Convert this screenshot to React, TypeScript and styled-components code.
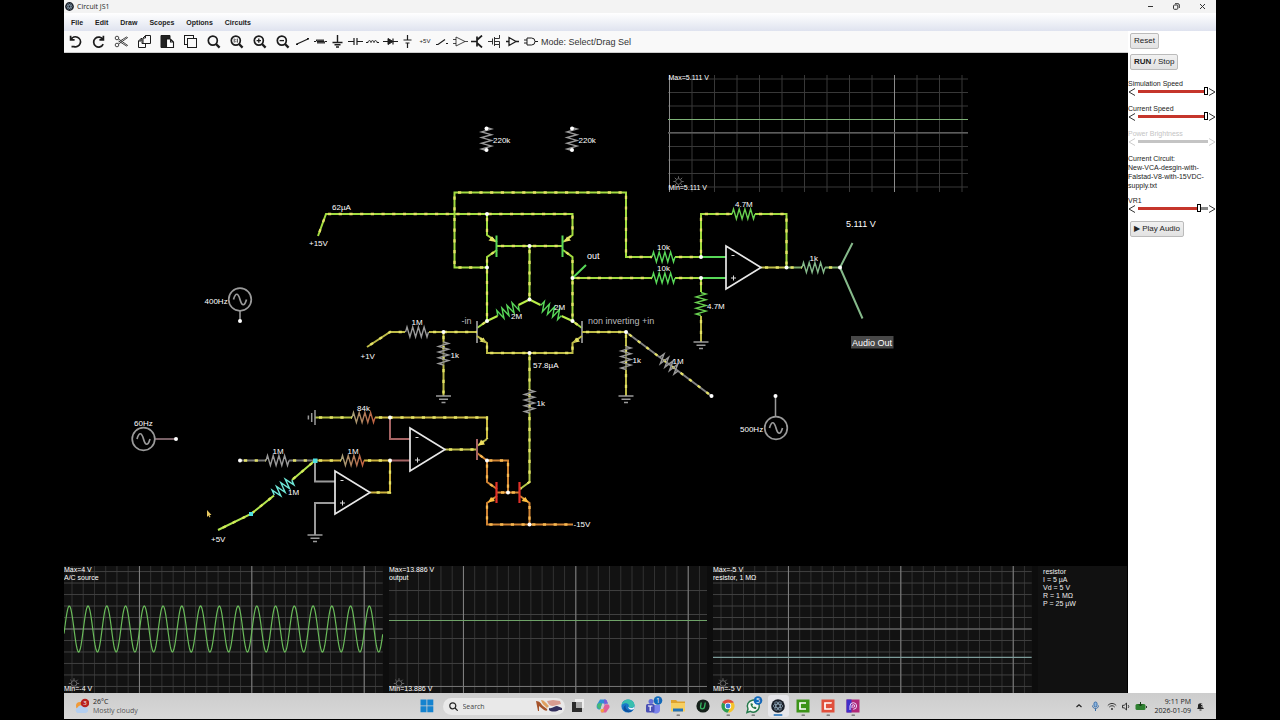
import React from "react";
import styled, { createGlobalStyle } from "styled-components";

const sans = `"Liberation Sans", Arial, sans-serif`;
const ui = `"Open Sans", "Noto Sans", sans-serif`;

const Global = createGlobalStyle`
  * { box-sizing: border-box; }
  body { margin: 0; background: #000; font-family: ${sans}; }
  button { font: inherit; color: inherit; cursor: pointer; }
`;

const Page = styled.div`
  display: flex;
  flex-direction: column;
  height: 100vh;
  padding: 0 5% 1px;
  background: #000;
`;

const TitleBar = styled.header`
  display: flex;
  align-items: center;
  justify-content: space-between;
  height: 13px;
  background: #f3f3f3;
  font-family: ${ui};
  font-size: 7px;
  line-height: 12px;
  color: #222;
`;

const TitleName = styled.div`
  display: flex;
  align-items: center;
  gap: 3px;
  padding-left: 1px;
`;

const WindowButtons = styled.div`
  display: flex;
  gap: 2px;
  padding-right: 2px;
`;

const WindowButton = styled.button`
  display: grid;
  place-items: center;
  width: 24px;
  height: 12px;
  padding: 0;
  border: 0;
  background: none;
`;

const MenuBar = styled.nav`
  display: flex;
  align-items: center;
  gap: 12px;
  height: 18px;
  padding: 0 7px;
  background: linear-gradient(#ffffff, #dfe3ef);
  font-size: 7px;
  font-weight: bold;
  color: #222;
`;

const MenuItem = styled.button`
  padding: 0;
  border: 0;
  background: none;
`;

const Body = styled.div`
  display: flex;
  flex: 1;
  min-height: 0;
`;

const Main = styled.main`
  display: flex;
  flex-direction: column;
  flex: 1;
  min-width: 0;
`;

const Toolbar = styled.div`
  display: flex;
  align-items: center;
  height: 22px;
  background: #f9f9f9;
  border-bottom: 1px solid #ccc;
`;

const ToolButton = styled.button`
  display: grid;
  place-items: center;
  width: 23px;
  height: 20px;
  padding: 0;
  border: 0;
  background: none;
`;

const PartGroup = styled.div`
  display: flex;
  width: 245px;
`;

const PartButton = styled(ToolButton)`
  flex: 1;
  width: auto;
`;

const Mode = styled.span`
  margin-left: 2px;
  font-size: 9px;
  color: #333;
`;

const Canvas = styled.svg`
  display: block;
  flex: 1;
  width: 100%;
  min-height: 0;
  background: #000;
  font-family: ${sans};
`;

const ScopeStrip = styled.section`
  display: grid;
  grid-template-columns: 319fr 319fr 319fr 89fr;
  gap: 6px;
  height: 127px;
  background: #0d0d0d;
  margin-right: 1px;
`;

const ScopeSvg = styled.svg`
  display: block;
  width: 100%;
  height: 127px;
  background: #121212;
  font-family: ${sans};
`;

const Readout = styled.div`
  padding: 2px 5px;
  background: #111;
  color: #eee;
  font-size: 7px;
  line-height: 8px;
`;

const Sidebar = styled.aside`
  display: flex;
  flex-direction: column;
  align-items: flex-start;
  width: 88px;
  padding-top: 2px;
  background: #fff;
  font-size: 7px;
  line-height: 9px;
  color: #222;
`;

const SideButton = styled.button`
  height: 16px;
  margin: 0 0 5px 2px;
  padding: 0 3px;
  border: 1px solid #bbb;
  border-radius: 2px;
  background: linear-gradient(#f1f1f1, #e2e2e2);
  font-size: 8px;
  line-height: 14px;
  white-space: nowrap;
`;

const SliderBlock = styled.div<{ $off?: boolean }>`
  width: 100%;
  height: 25px;
  color: ${(p) => (p.$off ? "#c4c4c4" : "#222")};
`;

const Sliders = styled.div`
  width: 100%;
  padding-top: 4px;
`;

const SliderLabel = styled.label`
  display: block;
  height: 8px;
`;

const SliderRow = styled.div`
  display: flex;
  align-items: center;
  height: 9px;
`;

const Step = styled.button`
  display: grid;
  place-items: center;
  width: 8px;
  height: 9px;
  padding: 0;
  border: 0;
  background: none;
`;

const Range = styled.input<{ $fill: number; $off?: boolean }>`
  appearance: none;
  flex: 1;
  min-width: 0;
  height: 9px;
  margin: 0 0 0 2px;
  background: none;
  &::-webkit-slider-runnable-track {
    height: 3px;
    background: ${(p) =>
      p.$off ? "#c4c4c4" : `linear-gradient(to right, #c5352b ${p.$fill}%, #888 ${p.$fill}%)`};
  }
  &::-webkit-slider-thumb {
    appearance: none;
    width: 4px;
    height: 8px;
    margin-top: -3px;
    border: 1px solid #000;
    background: #fff;
    visibility: ${(p) => (p.$off ? "hidden" : "visible")};
  }
`;

const CircuitName = styled.p`
  margin: 0 0 6px;
  overflow-wrap: anywhere;
`;

const Taskbar = styled.footer`
  display: grid;
  grid-template-columns: 1fr auto 1fr;
  align-items: center;
  height: 26px;
  background: linear-gradient(#cdcdcd, #d8d8d8);
  font-family: ${ui};
  font-size: 7px;
  line-height: 9px;
  color: #222;
`;

const Weather = styled.button`
  display: flex;
  align-items: center;
  justify-self: start;
  gap: 4px;
  padding: 0 0 0 10px;
  border: 0;
  background: none;
  text-align: left;
`;

const Muted = styled.span`
  display: block;
  color: #555;
`;

const Apps = styled.div`
  display: flex;
  align-items: center;
`;

const AppButton = styled.button<{ $active?: boolean }>`
  display: grid;
  place-items: center;
  width: ${(p) => (p.$active ? "21px" : "25px")};
  height: 22px;
  margin: 0 ${(p) => (p.$active ? "2px" : "0")};
  padding: 0;
  border: 0;
  border-radius: 3px;
  background: ${(p) => (p.$active ? "#e6e6ea" : "none")};
`;

const SearchBox = styled.label`
  display: flex;
  align-items: center;
  gap: 5px;
  width: 122px;
  height: 17px;
  margin: 0 1px 0 3px;
  padding: 0 2px 0 6px;
  border-radius: 9px;
  background: #e9e9e9;
`;

const SearchInput = styled.input`
  flex: 1;
  min-width: 0;
  padding: 0;
  border: 0;
  background: none;
  font-family: ${ui};
  font-size: 7px;
  &::placeholder { color: #444; opacity: 1; }
`;

const Tray = styled.div`
  display: flex;
  align-items: center;
  justify-self: end;
  gap: 5px;
  padding-right: 11px;
`;

const Clock = styled.time`
  margin-left: 2px;
  text-align: right;
`;

/* ---------- toolbar icons ---------- */

const Tool = ({ label, children }: { label: string; children: React.ReactNode }) => (
  <ToolButton aria-label={label}>
    <svg width="15" height="15" viewBox="0 0 15 15" fill="none" stroke="#1c1c1c" strokeWidth="1.7">
      {children}
    </svg>
  </ToolButton>
);

const Part = ({ label, children }: { label: string; children: React.ReactNode }) => (
  <PartButton aria-label={label}>
    <svg width="15" height="13" viewBox="0 0 15 13" fill="none" stroke="#1c1c1c" strokeWidth="1">
      {children}
    </svg>
  </PartButton>
);

const Lens = () => (
  <>
    <circle cx="6.8" cy="6.6" r="4.5" />
    <path d="M10 10l3.6 3.6" strokeWidth="2.3" />
  </>
);

const ToolIcons = () => (
  <>
    <Tool label="Undo">
      <path d="M2.600 1.800v4h4M3 5.600A5 5 0 1 1 6 12.600H3.500" strokeWidth="1.700" />
    </Tool>
    <Tool label="Redo">
      <path d="M12.400 1.800v4h-4M12 5.600A5 5 0 1 0 12.200 10.200" strokeWidth="1.700" />
    </Tool>
    <Tool label="Cut">
      <g strokeWidth="0.900" stroke="#333">
        <circle cx="3" cy="4" r="1.800" />
        <circle cx="3" cy="11" r="1.800" />
        <path d="M4.600 5L13.600 11.400 12.500 12 4.600 7M4.600 10L13.600 3.600 12.500 3 4.600 8" />
      </g>
    </Tool>
    <Tool label="Copy">
      <path d="M5 4.500V9.500H13.500V1.500H8.500L6 4V9.500M8.500 1.500V4H6M5 4.500H4L1.500 7V13.500H8.500V9.500M4 4.500V7H1.500" strokeWidth="1" />
    </Tool>
    <Tool label="Paste">
      <path d="M1 1.500h9v3H6v9H1z" fill="#222" strokeWidth="1" />
      <path d="M6.500 5h4l3 3v5.500h-7zM10.500 5v3h3" strokeWidth="1.100" fill="#fff" />
    </Tool>
    <Tool label="Duplicate">
      <rect x="1.500" y="1.500" width="9" height="9" strokeWidth="1" />
      <rect x="4.500" y="4.500" width="9" height="9" strokeWidth="1" fill="#f9f9f9" />
    </Tool>
    <Tool label="Find"><Lens /></Tool>
    <Tool label="Zoom 100%">
      <Lens />
      <path d="M5.200 4.600v4M8.400 4.600v4M6.800 5.200v1M6.800 7.200v1" strokeWidth="0.800" />
    </Tool>
    <Tool label="Zoom in">
      <Lens />
      <path d="M4.600 6.600h4.400M6.800 4.400v4.400" strokeWidth="1.300" />
    </Tool>
    <Tool label="Zoom out">
      <Lens />
      <path d="M4.600 6.600h4.400" strokeWidth="1.300" />
    </Tool>
    <PartGroup>
      <Part label="Wire">
        <path d="M2 9L13 4" strokeWidth="1.300" />
        <path d="M1 8.500h2v1.500H1zM12 3h2v1.500h-2z" fill="#1c1c1c" stroke="none" />
      </Part>
      <Part label="Resistor"><path d="M1 6.500h2l1-2 1 4 1-4 1 4 1-4 1 4 1-4 1 4 .700-2H14" /></Part>
      <Part label="Ground"><path d="M7.500 0v7.500M2.500 7.500h10M4.500 9.800h6M6 12h3" strokeWidth="1.400" /></Part>
      <Part label="Capacitor"><path d="M0 6.500h6M9 6.500h6M6 3v7M9 3v7" strokeWidth="1.200" /></Part>
      <Part label="Inductor"><path d="M1 7.500h2c0-2.500 3-2.500 3 0 0-2.500 3-2.500 3 0 0-2.500 3-2.500 3 0h2" /></Part>
      <Part label="Diode">
        <path d="M0 6.500h15M10 3.500v6" strokeWidth="1.200" />
        <path d="M5 3.500v6l5-3z" fill="#1c1c1c" />
      </Part>
      <Part label="Voltage source"><path d="M7.500 0v5M7.500 8v5M3.500 5h8M5.500 8h4" strokeWidth="1.200" /></Part>
      <PartButton aria-label="Rail">
        <svg width="15" height="13" viewBox="0 0 15 13">
          <text x="7" y="8" textAnchor="middle" fontSize="6" fontFamily="Liberation Sans" fill="#222">+5V</text>
        </svg>
      </PartButton>
      <Part label="Switch"><path d="M1 9.500h2l7-5M11 8.500h2" strokeWidth="1.200" /></Part>
      <Part label="Op-amp"><path d="M3 2l9 4.500L3 11zM0 4.500h3M0 8.500h3M12 6.500h3" strokeWidth="0.800" /></Part>
      <Part label="NPN transistor"><path d="M1 6.500h6M7 1.500v10M7 5l5-4.500M7 8l5 4.500" strokeWidth="1.700" /></Part>
      <Part label="MOSFET"><path d="M0 6.500h4.500M4.500 3.500v6M6.500 2v9M6.500 3.500h5V0M6.500 9.500h5V13M6.500 6.500h5v3" strokeWidth="0.900" /></Part>
      <Part label="Inverter"><path d="M4 2.500l7 4-7 4zM1 6.500h3M11 6.500h3" strokeWidth="1.300" /></Part>
      <Part label="AND gate"><path d="M4 3h4.500a3.500 3.500 0 0 1 0 7H4zM1 5h3M1 8h3M12 6.500h3" /></Part>
    </PartGroup>
  </>
);

/* ---------- circuit drawing ---------- */

const LIME = "#a2dc40";
const GREEN = "#58d858";
const OLIVE = "#bdbb48";
const GRAY = "#9a9a9a";
const PALE = "#85b98a";
const ROSE = "#a56464";
const ORANGE = "#d08434";

const Wire = ({ d, c = LIME, dots = true, dot = "#e4e266" }: { d: string; c?: string; dots?: boolean; dot?: string }) => (
  <g fill="none">
    <path d={d} stroke={c} strokeWidth="2" />
    {dots && <path d={d} stroke={dot} strokeWidth="2.300" strokeDasharray="3.200 7.500" strokeDashoffset="-4" />}
  </g>
);

const Resistor = ({ x, y, a = 0, c = GRAY }: { x: number; y: number; a?: number; c?: string }) => (
  <path
    transform={`translate(${x} ${y}) rotate(${a})`}
    d="M-11.500 0.100L-10-5L-7.100 5L-4.300-5L-1.400 5L1.400-5L4.300 5L7.100-5L10 5L11.500 0"
    fill="none"
    stroke={c}
    strokeWidth="1.400"
  />
);

const Ground = ({ x, y, a = 0 }: { x: number; y: number; a?: number }) => (
  <path
    transform={`translate(${x} ${y}) rotate(${a})`}
    d="M-7.500 0h15M-4.500 3.300h9M-2 6.600h4"
    stroke={GRAY}
    strokeWidth="1.500"
  />
);

const OpAmp = ({ x, y }: { x: number; y: number }) => (
  <g transform={`translate(${x} ${y})`}>
    <path d="M0-21.500V21.500L35 0z" fill="none" stroke="#e8e8e8" strokeWidth="1.700" />
    <path d="M5.500-12h3M5 10.500h5M7.500 8v5" stroke="#ddd" strokeWidth="1" />
  </g>
);

const Source = ({ x, y }: { x: number; y: number }) => (
  <g transform={`translate(${x} ${y})`} fill="none" stroke={GRAY} strokeWidth="1.700">
    <circle r="11.300" />
    <path d="M-6.500 0C-4.500-7-2-7 0 0S4.500 7 6.500 0" />
  </g>
);

const Label = ({ x, y, s = 8, children, fill = "#fff" }: { x: number; y: number; s?: number; children: string; fill?: string }) => (
  <text x={x} y={y} fontSize={s} fill={fill}>{children}</text>
);

const Gear = ({ x, y }: { x: number; y: number }) => (
  <g transform={`translate(${x} ${y})`} fill="none" stroke="#666" strokeWidth="1">
    <circle r="2.800" />
    <path d="M0-5.200V-3M0 3V5.200M-5.200 0H-3M3 0H5.200M-3.700-3.700l1.500 1.500M2.200 2.200l1.500 1.500M-3.700 3.700l1.500-1.500M2.200-2.200l1.500-1.500" />
  </g>
);

const nodes: [number, number][] = [
  [487, 214], [529.5, 246], [487, 267.5], [529.5, 299.5], [487, 321], [572.5, 321], [572.5, 278],
  [443.5, 332], [529.5, 353], [626, 332], [711.5, 396], [775.5, 396], [701, 257], [701, 278],
  [786.5, 267.5], [840, 267.5], [240, 321], [176, 439], [240, 460.5], [390, 417.5], [390, 460.5],
  [487, 460.5], [508, 492.5], [529.5, 524.5],
  [486.5, 128.5], [486.5, 150], [572, 128.5], [572, 150],
];

const steps = (from: number, to: number, by: number) => {
  const out: number[] = [];
  for (let v = from; v <= to; v += by) out.push(v);
  return out;
};

const Circuit = () => (
  <Canvas viewBox="64 53 1064 513" role="img" aria-label="Circuit schematic">
    <defs>
      <linearGradient id="warm">
        <stop offset="0" stopColor="#a5a078" />
        <stop offset="1" stopColor="#c06040" />
      </linearGradient>
    </defs>

    {/* floating scope */}
    <g stroke="#383838">
      {steps(692, 968, 22.5).map((x) => <path key={x} d={`M${x} 75V192`} />)}
      {steps(79, 190, 13.5).map((y) => <path key={y} d={`M668 ${y}H968`} />)}
    </g>
    <path d="M669.500 75V192M894.500 75V192" stroke="#8a8a8a" />
    <path d="M668 132.800H968" stroke="#5c5c5c" strokeWidth="1.500" />
    <path d="M668 119.500H968" stroke="#7fb478" />
    <Gear x={678.5} y={181.5} />
    <Label x={668.5} y={80} s={7}>Max=5.111 V</Label>
    <Label x={668.5} y={189.5} s={7}>Min=5.111 V</Label>

    {/* differential stage */}
    <Wire d="M318 236L326 214H572.5V235L563 242" />
    <Wire d="M487 267.5H454.5V192.5H626V257H652" />
    <Wire d="M487 214V235L497 242M497 250L487 257V321L477 328" />
    <Wire d="M497 246H562.5M529.5 246V299.5" />
    <Wire d="M563 250L572.5 257V321L582 328" />
    <Wire d="M529.5 299.5L518.500 305M497.500 316L487 321M529.500 299.500L540.500 305M561.500 316L572.500 321" c="#b9ee48" dots={false} />
    <Wire d="M572.5 278H652M675 278H701" />
    <Wire d="M675 257H701" />
    <Wire d="M572.5 278L586 265M701 257H726M701 278H726" c={GREEN} dots={false} />
    <path d="M496.500 235.500V257M562.500 235.500V257" stroke={GREEN} strokeWidth="2" />
    <path d="M477 321V343M582 321V343" stroke={GRAY} strokeWidth="1.700" />
    <path d="M495.500 242l-7-1.500 4-4zM564 242l7-1.500-4-4z" fill="#e8e468" />
    <path d="M486.500 343l-7-1.500 4-4zM573 343l7-1.500-4-4z" fill="#e8e468" />
    <Resistor x={508} y={310.5} a={-27} c={GREEN} />
    <Resistor x={551} y={310.5} a={27} c={GREEN} />
    <Wire d="M477 336L487 343V353H572.5V343L582 336" c={OLIVE} />
    <Wire d="M367 347L390 332H405M429 332H477M443.5 332V342M443.5 365V396" c={OLIVE} />
    <Wire d="M582 332H626V346M626 370V396" c={OLIVE} />
    <Wire d="M529.5 353V390M529.5 413V482L520 489" c="#b4c848" />
    <Wire d="M443.5 342V365M626 346V370M529.500 390V413" c="#6f6f40" />
    <Wire d="M626 332L711.5 396" c="#828282" />
    <Resistor x={417} y={332} />
    <Resistor x={443.5} y={353.5} a={90} />
    <Resistor x={626} y={358} a={90} />
    <Resistor x={529.5} y={401.5} a={90} />
    <Resistor x={669} y={364} a={37} />
    <Ground x={443.5} y={396} />
    <Ground x={626} y={396} />

    {/* output amplifier */}
    <Wire d="M701 257V214H732M755 214H786.5V267.5" />
    <Wire d="M761 267.5H786.5" c={OLIVE} />
    <Wire d="M786.5 267.5H802M825 267.5H840" c="#7aa868" />
    <Wire d="M701 278V292" />
    <Wire d="M701 316V342" c={OLIVE} />
    <Wire d="M852.5 243L840 267.5L862.5 318.500" c={PALE} dots={false} />
    <Resistor x={663.5} y={257} c={GREEN} />
    <Resistor x={663.5} y={278} c={GREEN} />
    <Resistor x={743.5} y={214} c="#68d050" />
    <Resistor x={701} y={304} a={90} c="#68d050" />
    <Resistor x={813.5} y={267.5} c={PALE} />
    <Ground x={701} y={342} />
    <OpAmp x={726} y={267.5} />

    {/* control section */}
    <Wire d="M315 417.5H352" c="#b4c040" />
    <Wire d="M375 417.5H487V439" c="#c9b840" />
    <Wire d="M487 439L477 446" c={OLIVE} />
    <Wire d="M390 417.5V439H410M390 460.5H410" c={ROSE} dots={false} />
    <Wire d="M445 449.5H477" c={OLIVE} />
    <Wire d="M477 453L487 460.5H508V492.5M487 460.5V482L497 489M497 492.5H519M497 496L487 503V524.5H573M520 496L529.5 503V524.5" c={ORANGE} dot="#f8b850" />
    <path d="M477 439V460" stroke={ROSE} strokeWidth="2" />
    <path d="M496.500 482V503M519.500 482V503" stroke="#e03028" strokeWidth="2.200" />
    <path d="M478.500 445.500l6.500-1-4-5z" fill="#f0e060" />
    <path d="M488 502.500l7-1.500-4-4zM528.500 502.500l-7-1.500 4-4z" fill="#ffc040" />
    <Wire d="M240 460.5H266M289 460.5H315" c="#777" />
    <Wire d="M315 460.5H341M364 460.500H390V492.500H370" c="#cdb23c" />
    <Wire d="M315 460.500V481.500H335M335 503H315V535" c={GRAY} dots={false} />
    <Wire d="M315 460.5L292 480M274 495.500L251 514L218 530" c="#b4e850" dot="#d6ea58" />
    <Resistor x={277.5} y={460.5} />
    <Resistor x={352.5} y={460.5} c="url(#warm)" />
    <Resistor x={363.5} y={417.5} c="url(#warm)" />
    <Resistor x={283} y={487.5} a={-40} c="#6fe8d8" />
    <Ground x={315} y={417.5} a={90} />
    <Ground x={315} y={535} />
    <OpAmp x={410} y={449.5} />
    <OpAmp x={335} y={492.5} />

    {/* signal sources and loose resistors */}
    <path d="M240 311V321M775.500 396V417" stroke={GRAY} strokeWidth="1.500" />
    <path d="M155 439H176" stroke="#a08088" strokeWidth="1.500" />
    <Source x={240} y={299.5} />
    <Source x={143.5} y={439} />
    <Source x={776} y={428} />
    <Resistor x={486.5} y={139} a={90} />
    <Resistor x={572} y={139} a={90} />

    {nodes.map(([x, y]) => <circle key={`${x}-${y}`} cx={x} cy={y} r="2" fill="#fff" />)}
    <path d="M313 458.500h4.500v4.500H313zM249 512h4v4h-4z" fill="#4fe0e0" />

    <Label x={493} y={143}>220k</Label>
    <Label x={578.5} y={143}>220k</Label>
    <Label x={332} y={210}>62µA</Label>
    <Label x={309} y={245.5}>+15V</Label>
    <Label x={204.5} y={303.5}>400Hz</Label>
    <Label x={411.5} y={325}>1M</Label>
    <Label x={360.5} y={358.5}>+1V</Label>
    <Label x={450.5} y={357.5}>1k</Label>
    <Label x={461.5} y={323.5} s={9} fill="#bbb">-in</Label>
    <Label x={588} y={323.5} s={9} fill="#bbb">non inverting +in</Label>
    <Label x={587} y={259} s={9}>out</Label>
    <Label x={511} y={319}>2M</Label>
    <Label x={554} y={309.5}>2M</Label>
    <Label x={533} y={367.5}>57.8µA</Label>
    <Label x={536.5} y={405.5}>1k</Label>
    <Label x={632.5} y={362.5}>1k</Label>
    <Label x={672.5} y={363.5}>1M</Label>
    <Label x={657} y={250}>10k</Label>
    <Label x={657} y={271}>10k</Label>
    <Label x={735} y={207}>4.7M</Label>
    <Label x={707} y={309}>4.7M</Label>
    <Label x={809.5} y={260.5}>1k</Label>
    <Label x={846} y={227} s={9}>5.111 V</Label>
    <rect x="851" y="336" width="42.500" height="12.500" fill="#484848" />
    <Label x={852} y={345.5} s={9}>Audio Out</Label>
    <Label x={740} y={431.5}>500Hz</Label>
    <Label x={134} y={426}>60Hz</Label>
    <Label x={357} y={411}>84k</Label>
    <Label x={272.5} y={453.5}>1M</Label>
    <Label x={347.5} y={453.5}>1M</Label>
    <Label x={288} y={495}>1M</Label>
    <Label x={211} y={541.5}>+5V</Label>
    <Label x={573.5} y={527}>-15V</Label>
    <path d="M207 510v7l1.500-1.500 1 2 1-.5-1-2h2z" fill="#e8c860" />
  </Canvas>
);

/* ---------- scopes ---------- */

type ScopeProps = {
  max: string; min: string; name: string;
  rows: number[]; strongRow: number; major: number; children: React.ReactNode;
};

const Scope = ({ max, min, name, rows, strongRow, major, children }: ScopeProps) => (
  <ScopeSvg viewBox="0 0 319 127" role="img" aria-label={name}>
    <g stroke="#323232">
      {steps(major - 67.5, 319, 11.25).map((x) => <path key={x} d={`M${x} 0V127`} />)}
    </g>
    <g stroke="#404040">
      {rows.map((y) => <path key={y} d={`M0 ${y}H319`} />)}
    </g>
    <g stroke="#858585">
      {[0, 1, 2].map((i) => <path key={i} d={`M${major + i * 112.5} 0V127`} />)}
    </g>
    <path d={`M0 ${strongRow}H319`} stroke="#777" />
    <Gear x={10} y={117.5} />
    {children}
    <Label x={0} y={5.5} s={7}>{max}</Label>
    <Label x={0} y={13.5} s={7}>{name}</Label>
    <Label x={0} y={125.5} s={7}>{min}</Label>
  </ScopeSvg>
);

const sine = Array.from({ length: 639 }, (_, i) => {
  const x = i / 2;
  const y = 63 - 23 * Math.cos(((x - 5.3) / 18.77) * Math.PI * 2);
  return `${i ? "L" : "M"}${x} ${y.toFixed(1)}`;
}).join("");

const fineRows = steps(5.5, 126, 11.5);
const coarseRows = [24.5, 48.5, 72.5, 97.5];

/* ---------- sidebar ---------- */

const Slider = ({ id, label, value, off }: { id: string; label: string; value: number; off?: boolean }) => (
  <SliderBlock $off={off}>
    <SliderLabel htmlFor={id}>{label}</SliderLabel>
    <SliderRow>
      <Step aria-label={`Decrease ${label}`} disabled={off}>
        <svg width="8" height="8" viewBox="0 0 8 8" fill="none" stroke={off ? "#ccc" : "#333"}><path d="M7 .500L1 4l6 3.500" /></svg>
      </Step>
      <Range id={id} type="range" min={0} max={100} defaultValue={value} disabled={off} $fill={value} $off={off} />
      <Step aria-label={`Increase ${label}`} disabled={off}>
        <svg width="8" height="8" viewBox="0 0 8 8" fill="none" stroke={off ? "#ccc" : "#333"}><path d="M1 .500L7 4l-6 3.500" /></svg>
      </Step>
    </SliderRow>
  </SliderBlock>
);

/* ---------- taskbar ---------- */

const Atom = ({ size }: { size: number }) => (
  <svg width={size} height={size} viewBox="0 0 16 16">
    <circle cx="8" cy="8" r="7.800" fill="#1b2029" />
    <g fill="none" stroke="#8fa6b8" strokeWidth=".9">
      <ellipse cx="8" cy="8" rx="5.500" ry="2.200" />
      <ellipse cx="8" cy="8" rx="5.500" ry="2.200" transform="rotate(60 8 8)" />
      <ellipse cx="8" cy="8" rx="5.500" ry="2.200" transform="rotate(120 8 8)" />
    </g>
  </svg>
);

const AppIcon = ({ label, running, active, children }: { label: string; running?: boolean; active?: boolean; children: React.ReactNode }) => (
  <AppButton aria-label={label} $active={active}>
    <svg width="20" height="22" viewBox="0 0 20 22">
      {children}
      {running && <rect x="8.500" y="19.500" width="3.500" height="1.300" rx=".6" fill="#666" />}
      {active && <rect x="5.500" y="19.300" width="9" height="1.500" rx=".7" fill="#1769b5" />}
    </svg>
  </AppButton>
);

const Badge = ({ n }: { n: string }) => (
  <g>
    <circle cx="15" cy="5.500" r="4.300" fill="#1268b8" />
    <text x="15" y="8" textAnchor="middle" fontSize="7" fontFamily="Open Sans" fill="#fff">{n}</text>
  </g>
);

export default function App() {
  return (
    <Page>
      <Global />
      <TitleBar>
        <TitleName><Atom size={9} /><span>Circuit JS1</span></TitleName>
        <WindowButtons>
          <WindowButton aria-label="Minimize">
            <svg width="7" height="7" stroke="#333" fill="none"><path d="M1 3.500h5" /></svg>
          </WindowButton>
          <WindowButton aria-label="Restore">
            <svg width="7" height="7" viewBox="0 0 7 7" stroke="#333" fill="none"><rect x=".5" y="2" width="4.300" height="4.300" rx="1" /><path d="M2 .7h3a1.300 1.300 0 0 1 1.300 1.300v3" /></svg>
          </WindowButton>
          <WindowButton aria-label="Close">
            <svg width="7" height="7" stroke="#333" fill="none"><path d="M1 1l5 5M6 1L1 6" /></svg>
          </WindowButton>
        </WindowButtons>
      </TitleBar>
      <MenuBar>
        {["File", "Edit", "Draw", "Scopes", "Options", "Circuits"].map((m) => <MenuItem key={m}>{m}</MenuItem>)}
      </MenuBar>
      <Body>
        <Main>
          <Toolbar>
            <ToolIcons />
            <Mode>Mode: Select/Drag Sel</Mode>
          </Toolbar>
          <Circuit />
          <ScopeStrip>
            <Scope max="Max=4 V" min="Min=-4 V" name="A/C source" rows={fineRows} strongRow={63} major={75.5}>
              <path d={sine} fill="none" stroke="#6abb5a" strokeWidth="1.200" />
            </Scope>
            <Scope max="Max=13.886 V" min="Min=13.886 V" name="output" rows={coarseRows} strongRow={120.5} major={74.5}>
              <path d="M0 54.500H319" stroke="#6fa468" />
            </Scope>
            <Scope max="Max=-5 V" min="Min=-5 V" name="resistor, 1 MΩ" rows={fineRows} strongRow={63} major={75.5}>
              <path d="M0 91.500H319" stroke="#7c9c9a" strokeWidth="1.300" />
            </Scope>
            <Readout>
              resistor<br />I = 5 µA<br />Vd = 5 V<br />R = 1 MΩ<br />P = 25 µW
            </Readout>
          </ScopeStrip>
        </Main>
        <Sidebar>
          <SideButton>Reset</SideButton>
          <SideButton><b>RUN</b> / Stop</SideButton>
          <Sliders>
            <Slider id="sim" label="Simulation Speed" value={100} />
            <Slider id="cur" label="Current Speed" value={100} />
            <Slider id="pow" label="Power Brightness" value={100} off />
          </Sliders>
          <CircuitName>Current Circuit:<br />New-VCA-desgin-with-Falstad-V8-with-15VDC-supply.txt</CircuitName>
          <Slider id="vr1" label="VR1" value={90} />
          <SideButton>▶ Play Audio</SideButton>
        </Sidebar>
      </Body>
      <Taskbar>
        <Weather>
          <svg width="15" height="16" viewBox="0 0 15 16">
            <circle cx="6" cy="8" r="4" fill="#f09a38" />
            <path d="M3.500 15a3 3 0 0 1 0-5.500 4 4 0 0 1 7-.5 3 3 0 0 1 1 6z" fill="#b4cff0" />
            <circle cx="11" cy="5" r="4.300" fill="#b8221f" />
            <text x="11" y="7.300" textAnchor="middle" fontSize="6" fill="#fff">3</text>
          </svg>
          <span>26°C<Muted>Mostly cloudy</Muted></span>
        </Weather>
        <Apps>
          <AppIcon label="Start">
            <path d="M3.500 4.500h6v6h-6zM10.300 4.500h6v6h-6zM3.500 11.300h6v6h-6zM10.300 11.300h6v6h-6z" fill="#1583cf" />
          </AppIcon>
          <SearchBox>
            <svg width="9" height="9" viewBox="0 0 9 9" fill="none" stroke="#222" strokeWidth="1.200"><circle cx="3.800" cy="3.800" r="3" /><path d="M6 6l2.700 2.700" /></svg>
            <SearchInput aria-label="Search" placeholder="Search" />
            <svg width="28" height="14" viewBox="0 0 28 14">
              <path d="M1 2c4 0 5 3 7 5l4 3c1 2-1 2-3 1L4 7v5H3z" fill="#a5532a" />
              <path d="M6 1c3 0 5 3 8 6l-2 2C9 6 7 5 6 1z" fill="#e0a060" />
              <path d="M12 2l6-1 7 1 1 3-8 2c-3 0-5-2-6-5z" fill="#d89c90" />
              <path d="M14 9c3 1 6-2 8-2l5 2v2h-3c-3 2-8 2-10 0z" fill="#34305e" />
            </svg>
          </SearchBox>
          <AppIcon label="Task view">
            <path d="M7 4h9v9H7z" fill="#eee" /><path d="M4 7h4v6h6v4H4z" fill="#2b2b2b" /><path d="M8 7h6v6H8z" fill="#aaa" />
          </AppIcon>
          <AppIcon label="Copilot">
            <path d="M7 4.500h5c2 0 2 3 3 4H9c-1 2-1 5-2 6-3 0-4-2-3-5z" fill="#2f8fd8" />
            <path d="M4 11c0-2 1-3 3-3l2 .5-1.500 5C6 15 4 13 4 11z" fill="#46b878" />
            <path d="M13 17.500H8c2-1 2-5 4-8 3-1 5 0 4.500 3z" fill="#e0609a" />
            <path d="M7.500 14.500l4-1-1 3.500c-2 1-3 0-3-2.500z" fill="#f0a040" />
            <path d="M11 4.500c3-.5 3 2 4 4-2 0-3 0-3.500 2z" fill="#7a5cd8" />
          </AppIcon>
          <AppIcon label="Edge">
            <circle cx="10" cy="11" r="6.600" fill="#1878c8" />
            <path d="M3.500 10C5 3 15 2.500 16.600 10c0 3-4 3.500-6 2 1.500-3-3-5.500-7.100-2z" fill="#38bfae" />
            <path d="M8 10c-2 3 2 7 7 5-3 4-10 2-9.500-2C6 11 7 10.500 8 10z" fill="#0d4f9c" />
            <path d="M10 12c3 2 6 1 6.500-1l-.5 3c-3 1.500-5 .5-6-2z" fill="#eef6ff" />
          </AppIcon>
          <AppIcon label="Teams">
            <circle cx="8" cy="6.500" r="2.500" fill="#6670d8" />
            <path d="M8 10h9v4a4 4 0 0 1-8 1z" fill="#7b83eb" />
            <rect x="3" y="9" width="8.500" height="8.500" rx="1.500" fill="#4a50b5" />
            <path d="M5 11h4.500M7.200 11v5" stroke="#fff" strokeWidth="1.200" />
            <Badge n="1" />
          </AppIcon>
          <AppIcon label="File Explorer" running>
            <path d="M3 5h5l1.500 1.500H17V16H3z" fill="#e0a32c" />
            <path d="M3 8h14v8.500H3z" fill="#f7cf60" />
            <path d="M5 13.500h10v3H5z" fill="#2272b8" />
          </AppIcon>
          <AppIcon label="Upwork">
            <circle cx="10" cy="11" r="6.600" fill="#15201a" />
            <path d="M8.200 7.500l-.7 4.500c0 2.500 3.500 2.500 4 0l.8-4.500" fill="none" stroke="#36b860" strokeWidth="1.300" />
          </AppIcon>
          <AppIcon label="Chrome" running>
            <path d="M10 11L4.300 7.700A6.600 6.600 0 0 1 15.700 7.700z" fill="#dd4b3e" />
            <path d="M4.300 7.700A6.600 6.600 0 0 0 10 17.600L13 12z" fill="#2f9e50" />
            <path d="M15.700 7.700A6.600 6.600 0 0 1 10 17.600L12.500 12 10 7.700z" fill="#f4c42c" />
            <circle cx="10" cy="11" r="3.200" fill="#fff" /><circle cx="10" cy="11" r="2.400" fill="#3b78e0" />
          </AppIcon>
          <AppIcon label="WhatsApp" running>
            <path d="M4 17.500l1-3.500a6 6 0 1 1 2.400 2.400z" fill="#f2f6f2" stroke="#267a4c" strokeWidth="1.500" />
            <path d="M7.500 8.500c0 3 2.500 5.500 5.500 5.500l.5-1.500-1.700-1-1 .8-1.500-1.600.8-1-1-1.500z" fill="#267a4c" />
            <Badge n="5" />
          </AppIcon>
          <AppIcon label="Circuit JS1" active>
            <g transform="translate(3 4)"><Atom size={14} /></g>
          </AppIcon>
          <AppIcon label="Camtasia" running>
            <rect x="3.500" y="4.500" width="13" height="13" fill="#3c9418" />
            <path d="M13 8H7v6h6" fill="none" stroke="#fff" strokeWidth="1.700" />
          </AppIcon>
          <AppIcon label="Camtasia Recorder" running>
            <rect x="3.500" y="4.500" width="13" height="13" fill="#e0503c" />
            <path d="M13 8.500V8H7v6h6v-1" fill="none" stroke="#fff" strokeWidth="1.700" />
          </AppIcon>
          <AppIcon label="Audio editor" running>
            <rect x="3.500" y="4.500" width="13" height="13" fill="#b02878" />
            <path d="M3.500 4.500h5v13h-5z" fill="#4030c8" />
            <path d="M7 15v-4a3.300 3.300 0 1 1 3.300 3.300M9 13v-2a1.300 1.300 0 1 1 1.300 1.300" fill="none" stroke="#e8d8ff" strokeWidth="1" />
          </AppIcon>
        </Apps>
        <Tray>
          <svg width="8" height="8" fill="none" stroke="#222" strokeWidth="1.200"><path d="M1.500 5L4 2.700 6.500 5" /></svg>
          <svg width="14" height="10" viewBox="0 0 14 10" fill="none" stroke="#3a6ea8"><rect x="6" y="1" width="3" height="5" rx="1.500" fill="#8ab4e0" /><path d="M4.500 4.500c0 4 6 4 6 0M7.500 7.500V10" /></svg>
          <svg width="10" height="9" viewBox="0 0 10 9" fill="none" stroke="#333"><path d="M.8 3.500c2.500-2.700 6-2.700 8.400 0M2.300 5c1.800-1.700 3.700-1.700 5.400 0" /><circle cx="5" cy="7" r="1" fill="#333" stroke="none" /></svg>
          <svg width="8" height="9" viewBox="0 0 8 9" fill="none" stroke="#333"><path d="M.5 3.300h1.700L4.500 1v7L2.200 5.800H.5zM6 3c1 1 1 2 0 3" /></svg>
          <svg width="12" height="9" viewBox="0 0 12 9"><rect x=".5" y="2" width="10" height="6" rx="1.500" fill="#2e8030" /><path d="M11 4h1v2h-1z" fill="#333" /><path d="M5.500 0v3.500M3.700 2l1.800 2 1.800-2" fill="none" stroke="#173c18" /></svg>
          <Clock>9:11 PM<br />2026-01-09</Clock>
          <svg width="9" height="9" viewBox="0 0 9 9"><path d="M1 7c1-1 1-2 1-3.500C2 .5 7 .5 7 3.500 7 5 7 6 8 7zM3.500 7.500h2v1h-2z" fill="#222" /><path d="M5 2.500h2.500L5.500 5H8" fill="none" stroke="#ddd" strokeWidth=".8" /></svg>
        </Tray>
      </Taskbar>
    </Page>
  );
}
